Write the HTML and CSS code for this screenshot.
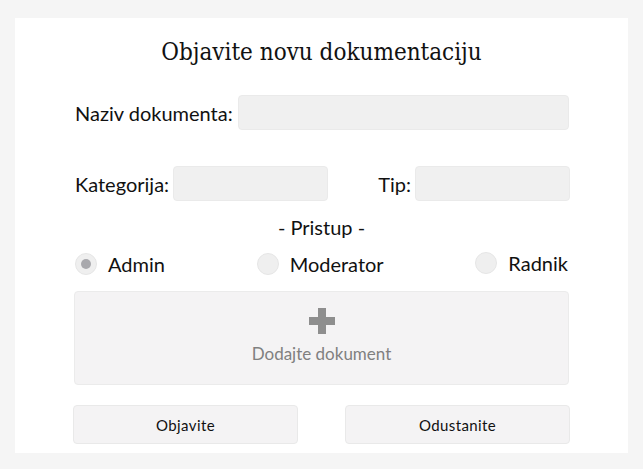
FILE: index.html
```html
<!DOCTYPE html>
<html lang="sr">
<head>
<meta charset="utf-8">
<title>Objavite novu dokumentaciju</title>
<link rel="stylesheet" href="styles.css">
</head>
<body>
<main class="card">
  <h1 class="title">Objavite novu dokumentaciju</h1>
  <div class="row row-name">
    <label class="label">Naziv dokumenta:</label>
    <div class="input input-wide"></div>
  </div>
  <div class="row row-cat">
    <div class="field">
      <label class="label">Kategorija:</label>
      <div class="input input-cat"></div>
    </div>
    <div class="field">
      <label class="label">Tip:</label>
      <div class="input input-tip"></div>
    </div>
  </div>
  <div class="access">- Pristup -</div>
  <div class="radios">
    <div class="radio-item"><span class="radio checked"></span><span class="rlabel">Admin</span></div>
    <div class="radio-item"><span class="radio"></span><span class="rlabel">Moderator</span></div>
    <div class="radio-item radnik"><span class="radio"></span><span class="rlabel">Radnik</span></div>
  </div>
  <div class="upload">
    <svg class="plus" width="26" height="26" viewBox="0 0 26 26"><path d="M9 0h8v9h9v8H17v9H9V17H0V9h9z" fill="#8e8e8e"/></svg>
    <div class="upload-text">Dodajte dokument</div>
  </div>
  <div class="buttons">
    <button class="btn">Objavite</button>
    <button class="btn">Odustanite</button>
  </div>
</main>
</body>
</html>
```
FILE: styles.css
```css
html, body { margin: 0; padding: 0; }
body {
  background: #f5f5f5;
  width: 643px;
  height: 469px;
  overflow: hidden;
  font-family: Lato, "Liberation Sans", sans-serif;
  color: #111;
}
.card {
  background: #fff;
  margin: 18px 15px 0 15px;
  height: 435px;
  box-sizing: border-box;
  padding: 16px 58px 0 58px;
}
.title {
  font-family: "DejaVu Serif Condensed", "DejaVu Serif", serif;
  font-stretch: condensed;
  font-weight: normal;
  font-size: 24px;
  text-align: center;
  margin: 0;
  height: 36px;
  line-height: 36px;
  color: #111;
}
.row { display: flex; align-items: center; }
.label { font-size: 20px; white-space: nowrap; flex-shrink: 0; }
.row-name { margin-top: 25px; }
.row-name .label { margin-left: 2px; margin-right: 5px; }
.input {
  background: #f0f0f0;
  border: 1px solid #eaeaea;
  border-radius: 4px;
  box-sizing: border-box;
  flex-shrink: 0;
}
.input-wide { flex: 1; height: 35px; margin-right: 1px; }
.row-cat { margin-top: 36px; justify-content: space-between; }
.field { display: flex; align-items: center; }
.row-cat .label { margin-left: 2px; margin-right: 4px; }
.input-cat { width: 155px; height: 35px; }
.input-tip { width: 155px; height: 35px; }
.access { text-align: center; font-size: 20px; margin-top: 13px; height: 26px; line-height: 26px; }
.radios { display: flex; justify-content: space-between; margin-top: 12px; padding-left: 2px; padding-right: 2px; }
.radio-item { display: flex; align-items: center; font-size: 20px; }
.radio {
  width: 22px; height: 22px; border-radius: 50%;
  background: #efefef; border: 1px solid #e6e6e6; box-sizing: border-box;
  margin-right: 11px; position: relative; display: inline-block;
}
.radio.checked::after {
  content: ""; position: absolute; left: 5px; top: 5px; width: 10px; height: 10px; border-radius: 50%; background: #a9a9ad;
}
.radnik { margin-top: -2px; }
.upload {
  margin-top: 15px;
  background: #f4f3f4;
  border: 1px solid #ebebeb;
  border-radius: 4px;
  height: 94px;
  box-sizing: border-box;
  margin-left: 1px;
  margin-right: 1px;
  display: flex; flex-direction: column; align-items: center;
  padding-top: 16px;
}
.upload-text { color: #808080; font-size: 17px; margin-top: 9px; }
.buttons { display: flex; justify-content: space-between; margin-top: 20px; }
.btn {
  width: 225px; height: 39px;
  background: #f4f3f4; border: 1px solid #e9e9e9; border-radius: 4px;
  font-family: Lato, "Liberation Sans", sans-serif;
  font-size: 15px; color: #111; letter-spacing: 0.4px;
}
```
